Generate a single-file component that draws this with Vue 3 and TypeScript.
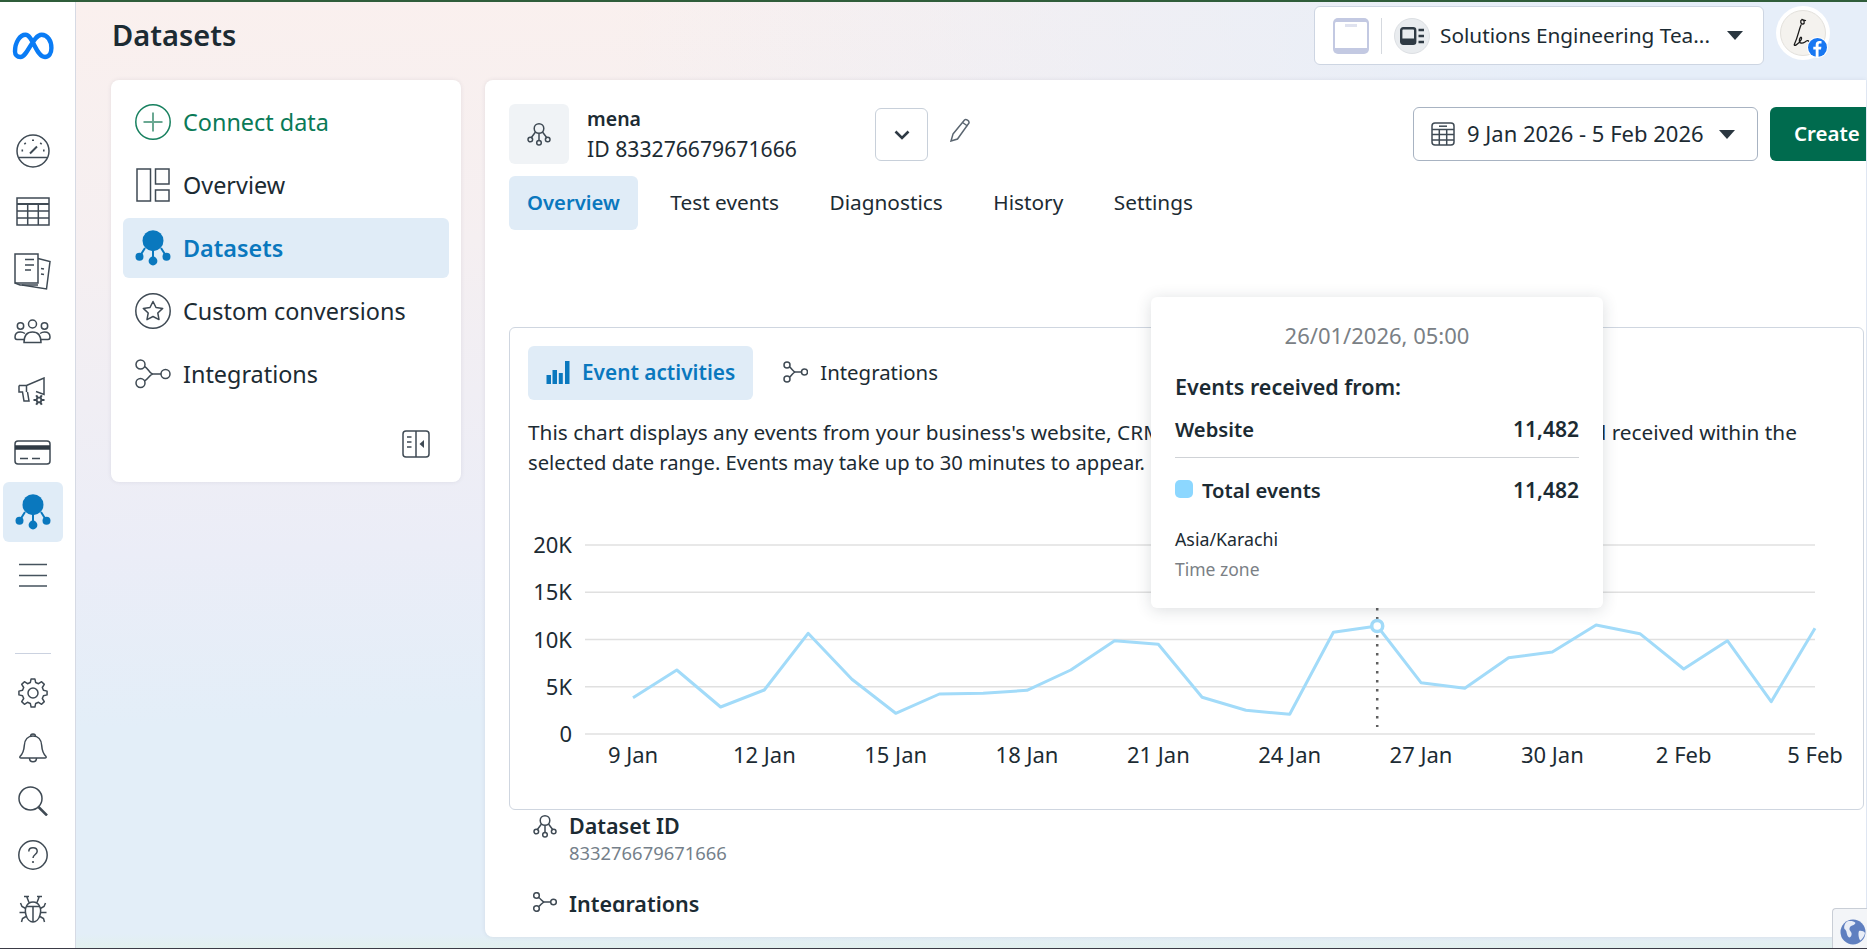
<script setup lang="ts">
const ys: number[] = [697.7, 670, 707, 690, 633.3, 679.3, 713.3, 694, 693.3, 690.3, 670, 640.7, 644.3, 697.3, 710.3, 714.3, 632.3, 626, 682.7, 688.3, 657.7, 652, 625, 633.7, 669, 640.7, 701.7, 628.3]
const originX = 528
const originY = 530
const step = (1815 - 633) / 27
const points = ys.map((y, i) => `${(633 + i * step - originX).toFixed(1)},${(y - originY).toFixed(1)}`).join(' ')
const grid = [
  { label: '20K', y: 15 },
  { label: '15K', y: 62.3 },
  { label: '10K', y: 109.5 },
  { label: '5K', y: 156.8 },
  { label: '0', y: 204 },
]
const xLabels = ['9 Jan', '12 Jan', '15 Jan', '18 Jan', '21 Jan', '24 Jan', '27 Jan', '30 Jan', '2 Feb', '5 Feb'].map((label, i) => ({
  label,
  x: 633 + i * 3 * step - originX,
}))
const gridLeft = 585 - originX
const gridRight = 1815 - originX
const markerX = 633 + 17 * step - originX
const markerY = 626 - originY

function gearPath(c: number, outer: number, inner: number, teeth: number): string {
  const parts: string[] = []
  const a = (Math.PI * 2) / teeth
  for (let i = 0; i < teeth; i++) {
    const t = i * a
    const pts: [number, number][] = [
      [inner, t - a * 0.32],
      [outer, t - a * 0.17],
      [outer, t + a * 0.17],
      [inner, t + a * 0.32],
    ]
    for (const [r, ang] of pts) {
      parts.push(`${(c + r * Math.cos(ang)).toFixed(2)} ${(c + r * Math.sin(ang)).toFixed(2)}`)
    }
  }
  return 'M' + parts.join('L') + 'Z'
}
const gear = gearPath(15, 14.2, 10.8, 8)
const smallGear = gearPath(6, 5.6, 3.4, 6)

const navTabs = ['Test events', 'Diagnostics', 'History', 'Settings']
</script>

<template>
  <div class="app">
    <aside class="rail">
      <div class="rail-logo">
        <svg width="42" height="28" viewBox="0 0 42 28" fill="none">
          <path d="M3 19.5C3 10 8 2.8 13.5 2.8C21 2.8 24 25 33 25C37 25 39.4 21.5 39.4 16C39.4 8.5 35.5 2.8 29.5 2.8C21 2.8 15.5 25 8.5 25C5 25 3 22.8 3 19.5Z" stroke="#0a7cf5" stroke-width="4.4" stroke-linejoin="round" />
        </svg>
      </div>
      <div class="rail-top">
        <div class="rail-item">
          <svg class="ico" width="34" height="34" viewBox="0 0 34 34">
            <circle cx="17" cy="17" r="16" />
            <path d="M3 23.5H31" />
            <path d="M14 19.5L21 12.5" stroke-width="2" />
            <path d="M17 5.5v1.6M8.5 9l1.1 1.1M25.5 9l-1.1 1.1M5.5 16.5h1.6M27 16.5h1.6" stroke-width="2" />
          </svg>
        </div>
        <div class="rail-item">
          <svg class="ico" width="34" height="29" viewBox="0 0 34 29">
            <rect x="1" y="1" width="32" height="27" />
            <path d="M1 7H33" stroke-width="2" />
            <path d="M1 14H33M1 21H33M11.7 7V28M22.3 7V28" />
          </svg>
        </div>
        <div class="rail-item">
          <svg class="ico" width="37" height="37" viewBox="0 0 37 37">
            <path d="M1 1H24V30H1Z" />
            <path d="M1 30L6 32H24" />
            <path d="M24 5.500L36 8.500L32.500 36L8 32" />
            <path d="M11 6.500H20M11 12H20M11 17H17M27 15.500l3 .6M27 21l3 .6" />
          </svg>
        </div>
        <div class="rail-item">
          <svg class="ico" width="37" height="25" viewBox="0 0 37 25">
            <circle cx="18.5" cy="5" r="4" />
            <circle cx="6.5" cy="7" r="3.2" />
            <circle cx="30.5" cy="7" r="3.2" />
            <path d="M10 23.5C10 16.5 13 13 18.5 13C24 13 27 16.5 27 23.5Z" />
            <path d="M10 20.5H3C1 20.5 1 19.5 1 18C1 14.5 3 13 6.5 13C8 13 9.5 13.5 11 14.5" />
            <path d="M27 20.5H34C36 20.5 36 19.5 36 18C36 14.5 34 13 30.5 13C29 13 27.500 13.5 26 14.5" />
          </svg>
        </div>
        <div class="rail-item">
          <svg class="ico" width="30" height="30" viewBox="0 0 30 30">
            <path d="M1 8.5H8.500L26 1V17.500L18 14.500" />
            <path d="M1 8.500V15H4.500L6 24H11L9.500 15" />
            <path d="M8.500 8.500V15" />
            <g transform="translate(15 17)">
              <path :d="smallGear" fill="#3f4a54" stroke="none" />
              <circle cx="6" cy="6" r="1.400" fill="#fff" stroke="none" />
            </g>
          </svg>
        </div>
        <div class="rail-item">
          <svg class="ico" width="37" height="25" viewBox="0 0 37 25">
            <rect x="1" y="1" width="35" height="23" rx="3" />
            <path d="M1 7.500H36" stroke-width="4.500" stroke="#2f3a44" />
            <path d="M6 18.500H14M18 18.500H26" />
          </svg>
        </div>
        <div class="rail-item active">
          <svg width="36" height="36" viewBox="0 0 36 36" class="filled">
            <path d="M18 15V31M10 18L4.500 26.700M26 18L31.500 26.700" stroke="#0a78be" stroke-width="2" />
            <circle cx="18" cy="10.700" r="10.500" />
            <circle cx="4.500" cy="26.700" r="4" />
            <circle cx="18" cy="31" r="4.400" />
            <circle cx="31.500" cy="26.700" r="4" />
          </svg>
        </div>
        <div class="rail-item menu">
          <svg class="ico thin" width="28" height="24" viewBox="0 0 28 24">
            <path d="M0 1.500H28M0 12.500H28M0 23H28" />
          </svg>
        </div>
      </div>
      <div class="rail-bottom">
        <div class="rail-sep"></div>
        <div class="rail-slot">
          <svg class="ico" width="30" height="30" viewBox="0 0 30 30">
            <path :d="gear" stroke-linejoin="round" />
            <circle cx="15" cy="15" r="5" />
          </svg>
        </div>
        <div class="rail-slot">
          <svg class="ico" width="30" height="31" viewBox="0 0 30 31">
            <path d="M2 24.500C5 21.500 6 18 6.300 13.500C6.600 7.500 10 4 15 4C20 4 23.400 7.500 23.700 13.500C24 18 25 21.500 28 24.500C28.500 25.500 28 26 27 26H3C2 26 1.500 25.500 2 24.500Z" />
            <path d="M12.500 4.500C12.500 1 17.500 1 17.500 4.500M11.500 26C11.500 31 18.500 31 18.500 26" />
          </svg>
        </div>
        <div class="rail-slot">
          <svg class="ico" width="30" height="30" viewBox="0 0 30 30">
            <circle cx="12.500" cy="12.500" r="11.500" />
            <path d="M20.500 21L29 29.500" stroke-width="2.500" />
          </svg>
        </div>
        <div class="rail-slot">
          <svg class="ico" width="30" height="30" viewBox="0 0 30 30">
            <circle cx="15" cy="15" r="14.200" />
            <path d="M10.800 11.500C10.800 9 12.800 7.800 15 7.800C17.400 7.800 19.200 9.300 19.200 11.300C19.200 14.500 15 14.500 15 18" />
            <circle cx="15" cy="22" r="1.100" fill="#3f4a54" stroke="none" />
          </svg>
        </div>
        <div class="rail-slot">
          <svg class="ico" width="28" height="28" viewBox="0 0 28 28">
            <path d="M7.500 11C9 8 11 7 14 7C17 7 19 8 20.500 11C22 14 22 17 21 20C20 24 17 27 14 27C11 27 8 24 7 20C6 17 6 14 7.500 11Z" />
            <path d="M7 11.500H21M14 11.500V27" />
            <path d="M10 7.500L7.500 1M18 7.500L20.500 1M5 1.500H10M18 1.500H23" />
            <path d="M6.700 13.500L3 11.500L1.500 8M21.300 13.500L25 11.500L26.500 8M6.200 17.500H.5M21.800 17.500H27.500M7 21.500L3.500 23.500L2.500 27M21 21.500L24.500 23.500L25.500 27" />
          </svg>
        </div>
      </div>
    </aside>

    <div class="content">
      <header class="topbar">
        <h1 class="page-title">Datasets</h1>
        <div class="account">
          <svg width="36" height="36" viewBox="0 0 36 36" class="bag">
            <rect x="0" y="0" width="36" height="36" rx="5" fill="#c3c9e2" />
            <path d="M2 5.500C2 4.600 2.600 4 3.500 4H32.500C33.400 4 34 4.600 34 5.500V30H2Z" fill="#fff" />
            <rect x="12" y="6" width="12" height="3" fill="#dfe2ef" />
          </svg>
          <span class="account-sep"></span>
          <span class="account-badge">
            <svg width="24" height="18" viewBox="0 0 24 18">
              <rect x="1.200" y="1.200" width="14" height="15.600" rx="2" fill="none" stroke="#2f3a44" stroke-width="2.400" />
              <rect x="1.200" y="11.500" width="14" height="5.300" fill="#2f3a44" />
              <path d="M18.500 3H24M18.500 9H24M18.500 15H24" stroke="#2f3a44" stroke-width="2.600" />
            </svg>
          </span>
          <span class="account-name">Solutions Engineering Tea...</span>
          <span class="caret"></span>
        </div>
        <div class="avatar">
          <div class="avatar-inner">
            <svg width="40" height="40" viewBox="0 0 40 40" fill="none">
              <path d="M19 6.500C16.500 8 18 11.500 20 11C22 10.500 21.500 6.500 19 6.500ZM19 6.500L22.500 7.500M18 12C15.500 18 15 24 11.500 31C10 34 15.500 31.500 18 27C19.500 24 17.500 23 16.500 26.500C15.500 31 19.500 30.500 22 29C24 27.500 25 27 26 28.500C27 29.800 29 28 32 26" stroke="#1a1a1a" stroke-width="1.300" stroke-linecap="round" stroke-linejoin="round" />
            </svg>
          </div>
          <span class="fb-badge">
            <svg width="19" height="19" viewBox="0 0 18 18">
              <circle cx="9" cy="9" r="9" fill="#1877f2" />
              <path d="M10 18V10.900H12.300L12.700 8.200H10V6.700C10 5.900 10.300 5.300 11.400 5.300H12.800V2.900C12.500 2.900 11.700 2.800 10.800 2.800C8.700 2.800 7.300 4 7.300 6.300V8.200H5V10.900H7.300V18Z" fill="#fff" />
            </svg>
          </span>
        </div>
      </header>

      <div class="body">
        <nav class="side-card">
          <div class="side-item connect">
            <svg width="36" height="36" viewBox="0 0 36 36" fill="none" stroke="#17805f" stroke-width="1.500">
              <circle cx="18" cy="18" r="17.200" />
              <path d="M18 8.500V27.500M8.500 18H27.500" stroke="#6aa892" stroke-width="2" />
            </svg>
            <span>Connect data</span>
          </div>
          <div class="side-item">
            <svg class="ico" width="36" height="36" viewBox="0 0 36 36">
              <rect x="2" y="2" width="13.500" height="32" />
              <rect x="20.500" y="2" width="13.500" height="15" />
              <rect x="20.500" y="23" width="13.500" height="11" />
            </svg>
            <span>Overview</span>
          </div>
          <div class="side-item current">
            <svg width="36" height="36" viewBox="0 0 36 36" class="filled">
              <path d="M18 15V31M10 18L4.500 26.700M26 18L31.500 26.700" stroke="#0a78be" stroke-width="2" />
              <circle cx="18" cy="10.700" r="10.500" />
              <circle cx="4.500" cy="26.700" r="4" />
              <circle cx="18" cy="31" r="4.400" />
              <circle cx="31.500" cy="26.700" r="4" />
            </svg>
            <span>Datasets</span>
          </div>
          <div class="side-item">
            <svg class="ico" width="36" height="36" viewBox="0 0 36 36">
              <circle cx="18" cy="18" r="17.200" />
              <path d="M18 8.500L21 14.500L27.700 15.400L22.800 20L24 26.600L18 23.500L12 26.600L13.200 20L8.300 15.400L15 14.500Z" stroke-linejoin="round" />
            </svg>
            <span>Custom conversions</span>
          </div>
          <div class="side-item">
            <svg class="ico" width="36" height="30" viewBox="0 0 36 30">
              <circle cx="5.500" cy="5.500" r="4.500" />
              <circle cx="5.500" cy="24" r="4.500" />
              <circle cx="30.500" cy="15" r="4.500" />
              <path d="M9.500 7.500C13 9 15 15 18 15H26M9.500 22C13 20.500 15 15 18 15" />
            </svg>
            <span>Integrations</span>
          </div>
          <div class="collapse-row">
            <svg class="ico" width="28" height="28" viewBox="0 0 28 28">
              <rect x="1" y="1" width="26" height="26" rx="3" />
              <path d="M14 1V27M5 7H9.500M5 12H9.500M5 17H9.500" />
              <path d="M22 10V18L17.500 14Z" fill="#3f4a54" stroke="none" />
            </svg>
          </div>
        </nav>

        <main class="main-card">
          <div class="head-row">
            <div class="head-icon">
              <svg class="ico" width="24" height="24" viewBox="0 0 24 24" stroke-width="1.300">
                <circle cx="12" cy="6.500" r="4.800" />
                <path d="M12 11.500V18.500M8.500 10L4 16M15.500 10L20 16" />
                <circle cx="3.300" cy="17.500" r="2.300" />
                <circle cx="12" cy="20.800" r="2.300" />
                <circle cx="20.700" cy="17.500" r="2.300" />
              </svg>
            </div>
            <div class="head-text">
              <div class="head-name">mena</div>
              <div class="head-id">ID 833276679671666</div>
            </div>
            <button class="chevron-btn" type="button">
              <svg width="16" height="10" viewBox="0 0 16 10" fill="none">
                <path d="M1.500 1.500L8 8L14.500 1.500" stroke="#2f3a44" stroke-width="2.600" />
              </svg>
            </button>
            <svg class="ico pencil" width="24" height="24" viewBox="0 0 24 24">
              <path d="M5 16L16.500 2C18 0.500 21.500 2.800 21 5L9.500 21L3 23Z" />
              <path d="M14.500 4.500L19.500 8" />
            </svg>
            <div class="date-picker">
              <svg class="ico" width="24" height="24" viewBox="0 0 24 24">
                <rect x="1" y="1" width="22" height="22" rx="3" />
                <path d="M1 7.500H23" stroke-width="1.500" />
                <path d="M1 12.500H23M1 18H23M8.300 7.500V23M15.700 7.500V23" />
                <path d="M8 4.200H16" stroke-width="1.500" />
              </svg>
              <span class="date-text">9 Jan 2026 - 5 Feb 2026</span>
              <span class="caret"></span>
            </div>
            <button class="create-btn" type="button">Create</button>
          </div>

          <div class="tabs">
            <div class="tab on">Overview</div>
            <div v-for="t in navTabs" :key="t" class="tab">{{ t }}</div>
          </div>

          <section class="chart-card">
            <div class="chart-tabs">
              <div class="chart-tab on">
                <svg width="24" height="24" viewBox="0 0 24 24" fill="#0a78be">
                  <rect x="0.500" y="15" width="4.500" height="9" />
                  <rect x="6.500" y="10" width="4.500" height="14" />
                  <rect x="12.800" y="13" width="4" height="11" />
                  <rect x="19" y="1" width="4.500" height="23" />
                </svg>
                <span>Event activities</span>
              </div>
              <div class="chart-tab">
                <svg class="ico" width="25" height="22" viewBox="0 0 25 22">
                  <circle cx="4" cy="4" r="3" />
                  <circle cx="4" cy="18" r="3" />
                  <circle cx="21.500" cy="11" r="3" />
                  <path d="M6.500 6C9 7.500 10 11 12.500 11H18.500M6.500 16C9 14.500 10 11 12.500 11" />
                </svg>
                <span>Integrations</span>
              </div>
            </div>
            <p class="chart-desc">This chart displays any events from your business's website, CRM, app or offline stores that you connected and received within the <span class="desc-tail">selected date range. Events may take up to 30 minutes to appear.</span></p>
            <svg class="chart" width="1335" height="250" viewBox="0 0 1335 250">
              <g v-for="g in grid" :key="g.label">
                <line :x1="gridLeft" :x2="gridRight" :y1="g.y" :y2="g.y" stroke="#e0e0e0" stroke-width="1.500" />
                <text :x="44" :y="g.y + 8" text-anchor="end" class="axis">{{ g.label }}</text>
              </g>
              <text v-for="x in xLabels" :key="x.label" :x="x.x" y="233" text-anchor="middle" class="axis">{{ x.label }}</text>
              <line :x1="markerX" :x2="markerX" y1="60" y2="197" stroke="#5f5f5f" stroke-width="2.500" stroke-dasharray="2.500 6.500" />
              <polyline :points="points" fill="none" stroke="#a2dbf9" stroke-width="3" stroke-linejoin="round" />
              <circle :cx="markerX" :cy="markerY" r="5.500" fill="#fff" stroke="#a2dbf9" stroke-width="3.500" />
            </svg>
          </section>

          <div class="details">
            <div class="detail">
              <svg class="ico" width="24" height="24" viewBox="0 0 24 24" stroke-width="1.300">
                <circle cx="12" cy="6.500" r="4.800" />
                <path d="M12 11.500V18.500M8.500 10L4 16M15.500 10L20 16" />
                <circle cx="3.300" cy="17.500" r="2.300" />
                <circle cx="12" cy="20.800" r="2.300" />
                <circle cx="20.700" cy="17.500" r="2.300" />
              </svg>
              <div>
                <div class="detail-title">Dataset ID</div>
                <div class="detail-value">833276679671666</div>
              </div>
            </div>
            <div class="detail next">
              <svg class="ico" width="24" height="20" viewBox="0 0 24 20">
                <circle cx="3.500" cy="3.500" r="2.800" />
                <circle cx="3.500" cy="16.500" r="2.800" />
                <circle cx="20.500" cy="10" r="2.800" />
                <path d="M5.800 5.500C8 7 9.500 10 11.500 10H17.700M5.800 14.500C8 13 9.500 10 11.500 10" />
              </svg>
              <div class="detail-title">Integrations</div>
            </div>
          </div>

          <div class="tooltip">
            <div class="tip-date">26/01/2026, 05:00</div>
            <div class="tip-head">Events received from:</div>
            <div class="tip-row">
              <span>Website</span>
              <span class="tip-num">11,482</span>
            </div>
            <div class="tip-rule"></div>
            <div class="tip-row total">
              <span class="tip-total-label"><i class="swatch"></i>Total events</span>
              <span class="tip-num">11,482</span>
            </div>
            <div class="tip-zone">Asia/Karachi</div>
            <div class="tip-zone-label">Time zone</div>
          </div>
        </main>
      </div>
    </div>

    <div class="globe-tab">
      <svg width="26" height="26" viewBox="0 0 26 26">
        <circle cx="13" cy="13" r="12.500" fill="#5f7fc0" />
        <path d="M7 2.500C10 1.500 14 2 15.500 4C14 7 10 6 9.500 9.500C9 12 12.500 13 11.500 16C11 18 9.500 19 8.500 18C6 15 7.500 12 4.500 10C3.500 7.500 5 4 7 2.500ZM19 12C21 11.500 24 12 25 14C24.500 17 22.500 20 20.500 21.500C18.500 20 18 14 19 12Z" fill="#e8edf7" />
      </svg>
    </div>
  </div>
</template>

<style scoped>
.app {
  position: relative;
  display: flex;
  width: 1867px;
  height: 949px;
  box-sizing: border-box;
  border-top: 2px solid #2f5d3a;
  border-bottom: 1px solid #3b3b46;
  overflow: hidden;
  font-family: "Noto Sans", "Liberation Sans", sans-serif;
  color: #1c2b33;
}
.ico {
  display: block;
  fill: none;
  stroke: #3f4a54;
  stroke-width: 1.5;
  flex: none;
}
.ico.thin {
  stroke: #46535e;
}
.filled {
  display: block;
  fill: #0a78be;
  flex: none;
}
.rail {
  flex: none;
  width: 76px;
  box-sizing: border-box;
  background: #fff;
  border-right: 1.5px solid #d6dae4;
  display: flex;
  flex-direction: column;
  align-items: center;
  padding-right: 10px;
}
.rail-logo {
  height: 88px;
  display: flex;
  align-items: center;
  justify-content: center;
}
.rail-top {
  margin-top: 31px;
  width: 60px;
}
.rail-item {
  height: 60.2px;
  display: flex;
  align-items: center;
  justify-content: center;
  border-radius: 6px;
}
.rail-item.active {
  background: #e0ecf7;
}
.rail-item.menu {
  margin-top: 3px;
}
.rail-bottom {
  margin-top: auto;
  padding-bottom: 12px;
  width: 60px;
  display: flex;
  flex-direction: column;
  align-items: center;
}
.rail-sep {
  width: 36px;
  height: 1px;
  background: #cbd2e0;
  margin-bottom: 12px;
}
.rail-slot {
  height: 54px;
  display: flex;
  align-items: center;
  justify-content: center;
}
.content {
  flex: 1;
  min-width: 0;
  display: flex;
  flex-direction: column;
  background:
    linear-gradient(0deg, #e2f0ee 0, rgba(226, 240, 238, 0) 14px),
    linear-gradient(90deg, rgba(230, 238, 249, 0) 30%, #e6eef9 85%),
    linear-gradient(178deg, #faf0ee 0%, #f5eff1 25%, #ebedf7 55%, #e3eef8 72%, #e3eef8 100%);
}
.topbar {
  height: 78px;
  flex: none;
  display: flex;
  align-items: flex-start;
  padding-left: 36px;
}
.page-title {
  margin: 15px 0 0;
  font-size: 29px;
  line-height: 36px;
  font-weight: 600;
}
.account {
  margin: 4px 0 0 auto;
  width: 450px;
  height: 59px;
  box-sizing: border-box;
  background: #fff;
  border: 1px solid #cdd5e2;
  border-radius: 6px;
  display: flex;
  align-items: center;
  padding: 0 20px 0 18px;
}
.bag {
  display: block;
  flex: none;
}
.account-sep {
  width: 1px;
  height: 36px;
  background: #d5d9df;
  margin: 0 12px;
}
.account-badge {
  width: 36px;
  height: 36px;
  border-radius: 50%;
  background: #e9ecef;
  border: 1px solid #dcdfe3;
  box-sizing: border-box;
  display: flex;
  align-items: center;
  justify-content: center;
  flex: none;
}
.account-name {
  margin-left: 10px;
  padding-bottom: 2px;
  font-size: 20.800px;
  white-space: nowrap;
  flex: 1;
}
.caret {
  width: 0;
  height: 0;
  border-left: 8px solid transparent;
  border-right: 8px solid transparent;
  border-top: 9px solid #2a3640;
  flex: none;
}
.avatar {
  position: relative;
  width: 54px;
  height: 54px;
  margin: 4px 37px 0 12px;
  border-radius: 50%;
  background: #fff;
  display: flex;
  align-items: center;
  justify-content: center;
  flex: none;
}
.avatar-inner {
  width: 46px;
  height: 46px;
  border-radius: 50%;
  background: #f4f2ee;
  border: 1px solid #e3e1dc;
  box-sizing: border-box;
  display: flex;
  align-items: center;
  justify-content: center;
}
.fb-badge {
  position: absolute;
  right: 2px;
  bottom: 2px;
  width: 21px;
  height: 21px;
  border-radius: 50%;
  background: #fff;
  display: flex;
  align-items: center;
  justify-content: center;
}
.body {
  flex: 1;
  min-height: 0;
  display: flex;
  align-items: flex-start;
  padding-left: 35px;
  gap: 24px;
}
.side-card {
  flex: none;
  width: 350px;
  height: 402px;
  box-sizing: border-box;
  background: #fff;
  border-radius: 8px;
  padding: 12px 12px 0;
  box-shadow: 0 0 4px rgba(60, 70, 90, 0.1);
}
.side-item {
  height: 60px;
  margin-bottom: 3px;
  display: flex;
  align-items: center;
  gap: 12px;
  padding-left: 12px;
  border-radius: 6px;
  font-size: 23.400px;
}
.side-item.connect {
  color: #0a7a57;
}
.side-item.current {
  background: #e0ecf7;
  color: #0a78be;
  font-weight: 600;
}
.collapse-row {
  display: flex;
  justify-content: flex-end;
  padding: 23px 19px 0 0;
}
.main-card {
  position: relative;
  flex: none;
  width: 1381px;
  height: 857px;
  box-sizing: border-box;
  background: #fff;
  border-radius: 8px 0 0 8px;
  padding: 24px 0 0 24px;
  box-shadow: 0 0 4px rgba(60, 70, 90, 0.1);
}
.head-row {
  display: flex;
  align-items: flex-start;
  height: 60px;
}
.head-icon {
  width: 60px;
  height: 60px;
  background: #f0f3f6;
  border-radius: 6px;
  display: flex;
  align-items: center;
  justify-content: center;
  flex: none;
}
.head-text {
  margin-left: 18px;
  width: 288px;
  flex: none;
}
.head-name {
  font-size: 19.500px;
  font-weight: 600;
  line-height: 30px;
}
.head-id {
  font-size: 21.200px;
  line-height: 30px;
}
.chevron-btn {
  width: 53px;
  height: 53px;
  margin-top: 4px;
  background: #fff;
  border: 1px solid #c8d0da;
  border-radius: 6px;
  display: flex;
  align-items: center;
  justify-content: center;
  padding: 0;
  flex: none;
}
.pencil {
  margin: 14px 0 0 20px;
  stroke: #5a6570;
}
.date-picker {
  margin: 3px 0 0 auto;
  width: 345px;
  height: 54px;
  box-sizing: border-box;
  border: 1px solid #a8b3c2;
  border-radius: 6px;
  display: flex;
  align-items: center;
  padding: 0 22px 0 17px;
  flex: none;
}
.date-text {
  margin-left: 12px;
  padding-bottom: 2px;
  font-size: 22px;
  flex: 1;
  white-space: nowrap;
}
.create-btn {
  margin: 3px 0 0 12px;
  height: 54px;
  width: 96px;
  box-sizing: border-box;
  background: #006b4e;
  border: 0;
  border-radius: 6px 0 0 6px;
  color: #fff;
  font-family: inherit;
  font-size: 20.500px;
  font-weight: 600;
  text-align: left;
  padding: 0 0 2px 24px;
  flex: none;
}
.tabs {
  display: flex;
  gap: 14.500px;
  margin-top: 12px;
}
.tab {
  height: 54px;
  box-sizing: border-box;
  padding: 0 18px 2px;
  border-radius: 6px;
  display: flex;
  align-items: center;
  font-size: 20.800px;
}
.tab.on {
  background: #e0ecf7;
  color: #0a78be;
  font-weight: 600;
  font-size: 20.300px;
}
.chart-card {
  margin-top: 97px;
  width: 1355px;
  height: 483px;
  box-sizing: border-box;
  border: 1px solid #cfd6e0;
  border-radius: 6px;
  padding: 18px 18px 0;
}
.chart-tabs {
  display: flex;
  gap: 12px;
}
.chart-tab {
  height: 54px;
  box-sizing: border-box;
  padding: 0 18px 2px;
  border-radius: 6px;
  display: flex;
  align-items: center;
  gap: 12px;
  font-size: 20.400px;
}
.chart-tab.on {
  background: #e0ecf7;
  color: #0a78be;
  font-weight: 600;
  font-size: 20.800px;
}
.chart-desc {
  margin: 17px 0 0;
  font-size: 20.800px;
  line-height: 30px;
}
.desc-tail {
  font-size: 20.200px;
}
.chart {
  display: block;
  margin-top: 53px;
}
.axis {
  font-size: 22px;
  fill: #1c2b33;
  font-family: "Noto Sans", "Liberation Sans", sans-serif;
}
.details {
  height: 102px;
  overflow: hidden;
  padding-left: 24px;
}
.detail {
  display: flex;
  align-items: flex-start;
  gap: 12px;
  margin-top: 4px;
}
.detail.next {
  margin-top: 27px;
}
.detail-title {
  font-size: 21.500px;
  line-height: 24px;
  font-weight: 600;
}
.detail-value {
  margin-top: 3px;
  font-size: 18.400px;
  line-height: 24px;
  color: #757f8a;
}
.tooltip {
  position: absolute;
  left: 666px;
  top: 217px;
  width: 452px;
  height: 311px;
  box-sizing: border-box;
  background: #fff;
  border-radius: 6px;
  padding: 24px 24px 0;
  box-shadow: 0 2px 16px rgba(40, 50, 60, 0.16);
}
.tip-date {
  text-align: center;
  font-size: 22px;
  line-height: 28px;
  color: #7a8085;
}
.tip-head {
  margin-top: 24px;
  font-size: 21.500px;
  line-height: 28px;
  font-weight: 600;
}
.tip-row {
  display: flex;
  justify-content: space-between;
  margin-top: 14px;
  font-size: 20.200px;
  line-height: 28px;
  font-weight: 600;
}
.tip-num {
  font-size: 21px;
}
.tip-rule {
  height: 1px;
  background: #cfd2d6;
  margin-top: 14px;
}
.tip-row.total {
  margin-top: 18px;
}
.tip-total-label {
  display: flex;
  align-items: center;
}
.swatch {
  width: 18px;
  height: 18px;
  border-radius: 5px;
  background: #8cd7ff;
  margin-right: 9px;
  margin-top: -3px;
}
.tip-zone {
  margin-top: 20px;
  font-size: 17.800px;
  line-height: 30px;
}
.tip-zone-label {
  font-size: 17.500px;
  line-height: 30px;
  color: #7a8085;
}
.globe-tab {
  position: absolute;
  right: 0;
  bottom: 0;
  width: 35px;
  height: 40px;
  box-sizing: border-box;
  background: #f3f5f8;
  border: 1px solid #c9ced6;
  border-right: 0;
  border-bottom: 0;
  border-radius: 4px 0 0 0;
  padding: 10px 0 0 7px;
}
</style>
